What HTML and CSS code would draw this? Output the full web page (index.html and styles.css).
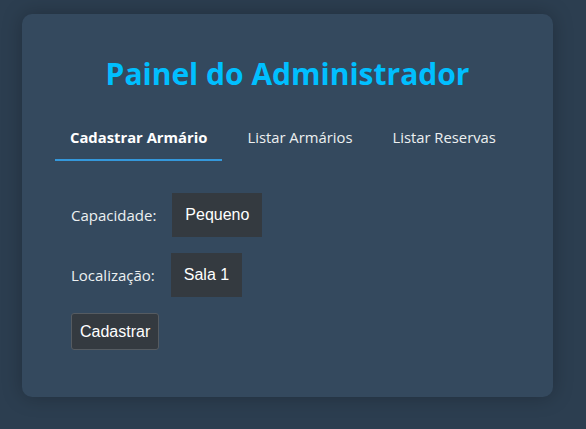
FILE: index.html
```html
<!DOCTYPE html>
<html lang="pt">
<head>
<meta charset="utf-8">
<title>Painel do Administrador</title>
<link rel="stylesheet" href="styles.css">
</head>
<body>
<div class="card">
  <h1 class="title">Painel do Administrador</h1>
  <nav class="tabs">
    <span class="tab active">Cadastrar Armário</span>
    <span class="tab">Listar Armários</span>
    <span class="tab">Listar Reservas</span>
  </nav>
  <form class="form">
    <div class="row">
      <label class="label">Capacidade:</label>
      <div class="select">Pequeno</div>
    </div>
    <div class="row">
      <label class="label">Localização:</label>
      <div class="select">Sala 1</div>
    </div>
    <button type="button" class="btn">Cadastrar</button>
  </form>
</div>
</body>
</html>
```
FILE: styles.css
```css
html, body {
  margin: 0;
  background: #2c3e50;
  height: 100%;
}
body {
  padding: 14px 33px 0 22px;
  box-sizing: border-box;
  font-family: "Open Sans", "Noto Sans", sans-serif;
}
.card {
  background: #34495e;
  border-radius: 10px;
  box-shadow: 0 0 20px rgba(0, 0, 0, 0.25);
  padding: 20px 33px 47px 33px;
}
.title {
  margin: 21px 0 24px;
  text-align: center;
  color: #00bfff;
  font-size: 30px;
  font-weight: 700;
  line-height: 38px;
}
.tabs {
  display: flex;
  gap: 10px;
}
.tab {
  color: #ecf0f1;
  font-size: 14.8px;
  line-height: 20px;
  padding: 10px 15px 12px;
  border-bottom: 2px solid transparent;
  white-space: nowrap;
  flex-shrink: 0;
}
.tab.active {
  font-weight: 700;
  color: #ffffff;
  border-bottom-color: #3498db;
}
.form {
  padding: 32px 16px 0;
  display: flex;
  flex-direction: column;
  align-items: flex-start;
}
.row {
  display: flex;
  align-items: center;
  gap: 16px;
  margin-bottom: 16px;
}
.label {
  color: #ecf0f1;
  font-size: 15px;
}
.select {
  background: #343a40;
  color: #ffffff;
  font-family: "Liberation Sans", Arial, sans-serif;
  font-size: 16px;
  padding: 12px 13px;
  line-height: 20px;
}
.btn {
  background: #343a40;
  color: #ffffff;
  font-family: "Liberation Sans", Arial, sans-serif;
  font-size: 16px;
  border: 1px solid #555b61;
  border-radius: 3px;
  padding: 8px 8px;
  line-height: 19px;
}
```
